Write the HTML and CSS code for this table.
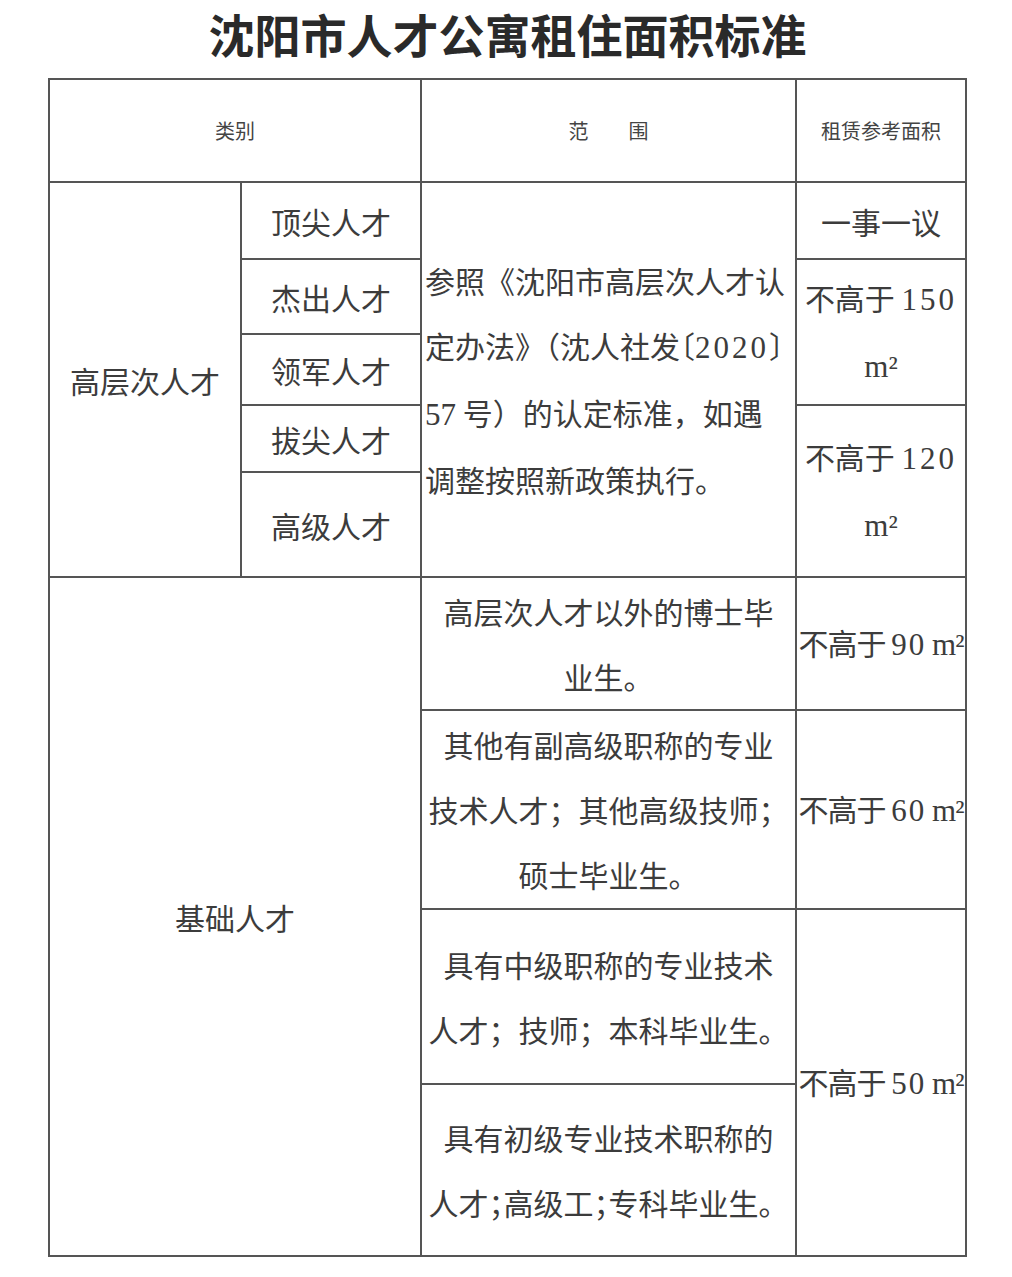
FILE: index.html
```html
<!DOCTYPE html>
<html lang="zh-CN">
<head>
<meta charset="utf-8">
<title>沈阳市人才公寓租住面积标准</title>
<link rel="stylesheet" href="styles.css">
</head>
<body>
<div class="page">
  <h1 class="title">沈阳市人才公寓租住面积标准</h1>
  <div class="table">
    <div class="cell head c-cat">类别</div>
    <div class="cell head c-scope">范　　围</div>
    <div class="cell head c-area">租赁参考面积</div>

    <div class="cell txt hl">高层次人才</div>
    <div class="cell txt sub r2">顶尖人才</div>
    <div class="cell txt sub r3">杰出人才</div>
    <div class="cell txt sub r4">领军人才</div>
    <div class="cell txt sub r5">拔尖人才</div>
    <div class="cell txt sub r6">高级人才</div>

    <div class="cell txt ref">
      <p class="para">参照《沈阳市高层次人才认<br>定办法》（沈人社发<span class="half">〔</span><span class="num wide">2020</span><span class="half">〕</span><br><span class="num">57</span> 号）的认定标准，如遇<br>调整按照新政策执行。</p>
    </div>

    <div class="cell txt area a-top">一事一议</div>
    <div class="cell txt area a-150"><p class="para c">不高于 <span class="num sp">150</span><br><span class="num">m²</span></p></div>
    <div class="cell txt area a-120"><p class="para c">不高于 <span class="num sp">120</span><br><span class="num">m²</span></p></div>

    <div class="cell txt basic">基础人才</div>

    <div class="cell txt mid m7"><p class="para c">高层次人才以外的博士毕<br>业生。</p></div>
    <div class="cell txt area a-90"><p class="para c tight">不高于 <span class="num sp">90</span> <span class="num">m²</span></p></div>

    <div class="cell txt mid m8"><p class="para c">其他有副高级职称的专业<br>技术人才；其他高级技师；<br>硕士毕业生。</p></div>
    <div class="cell txt area a-60"><p class="para c tight">不高于 <span class="num sp">60</span> <span class="num">m²</span></p></div>

    <div class="cell txt mid m9"><p class="para c">具有中级职称的专业技术<br>人才；技师；本科毕业生。</p></div>
    <div class="cell txt mid m10"><p class="para c">具有初级专业技术职称的<br>人才<span class="half">；</span>高级工<span class="half">；</span>专科毕业生。</p></div>
    <div class="cell txt area a-50"><p class="para c tight">不高于 <span class="num sp">50</span> <span class="num">m²</span></p></div>
  </div>
</div>
</body>
</html>
```

FILE: styles.css
```css
html, body {
  margin: 0;
  padding: 0;
  background: #ffffff;
}

body {
  font-family: "Noto Sans CJK SC", "Noto Sans", sans-serif;
  color: #3c3c3c;
}

.page {
  padding-left: 48px;
  width: 919px;
}

.title {
  margin: 0 0 8px 0;
  height: 70px;
  line-height: 66px;
  font-size: 46px;
  font-weight: 700;
  color: #2a2a2a;
  text-align: center;
}

.table {
  display: grid;
  grid-template-columns: 190px 178px 373px 168px;
  grid-template-rows: 101px 75px 73px 69px 65px 103px 131px 197px 173px 170px;
  gap: 2px;
  padding: 2px;
  background: #555555;
  width: 915px;
}

.cell {
  background: #ffffff;
  display: flex;
  align-items: center;
  justify-content: center;
  text-align: center;
  white-space: nowrap;
}

.head {
  font-size: 20px;
  color: #444444;
}

.txt {
  font-size: 30px;
  line-height: 66px;
  font-weight: 400;
}

.para {
  margin: 0;
  line-height: 65px;
  text-align: left;
}

.para.c {
  text-align: center;
}

.num {
  font-family: "Liberation Serif", serif;
  font-size: 31px;
}

.num.sp {
  letter-spacing: 3px;
}

.num.wide {
  letter-spacing: 3px;
}

.half {
  font-feature-settings: "halt";
}

/* header placement */
.c-cat   { grid-column: 1 / 3; grid-row: 1; }
.c-scope { grid-column: 3; grid-row: 1; }
.c-area  { grid-column: 4; grid-row: 1; }

/* high-level talent */
.hl  { grid-column: 1; grid-row: 2 / 7; }
.r2  { grid-column: 2; grid-row: 2; }
.r3  { grid-column: 2; grid-row: 3; }
.r4  { grid-column: 2; grid-row: 4; }
.r5  { grid-column: 2; grid-row: 5; }
.r6  { grid-column: 2; grid-row: 6; }

.ref {
  grid-column: 3;
  grid-row: 2 / 7;
  justify-content: flex-start;
  padding-left: 3px;
}

.a-top { grid-column: 4; grid-row: 2; }
.a-150 { grid-column: 4; grid-row: 3 / 5; }
.a-120 { grid-column: 4; grid-row: 5 / 7; }

/* basic talent */
.basic { grid-column: 1 / 3; grid-row: 7 / 11; }
.m7  { grid-column: 3; grid-row: 7; }
.m8  { grid-column: 3; grid-row: 8; }
.m9  { grid-column: 3; grid-row: 9; }
.m10 { grid-column: 3; grid-row: 10; }
.a-90 { grid-column: 4; grid-row: 7; }
.a-60 { grid-column: 4; grid-row: 8; }
.a-50 { grid-column: 4; grid-row: 9 / 11; }

.tight {
  letter-spacing: -1px;
}

.tight .num.sp {
  letter-spacing: 2px;
}
```
